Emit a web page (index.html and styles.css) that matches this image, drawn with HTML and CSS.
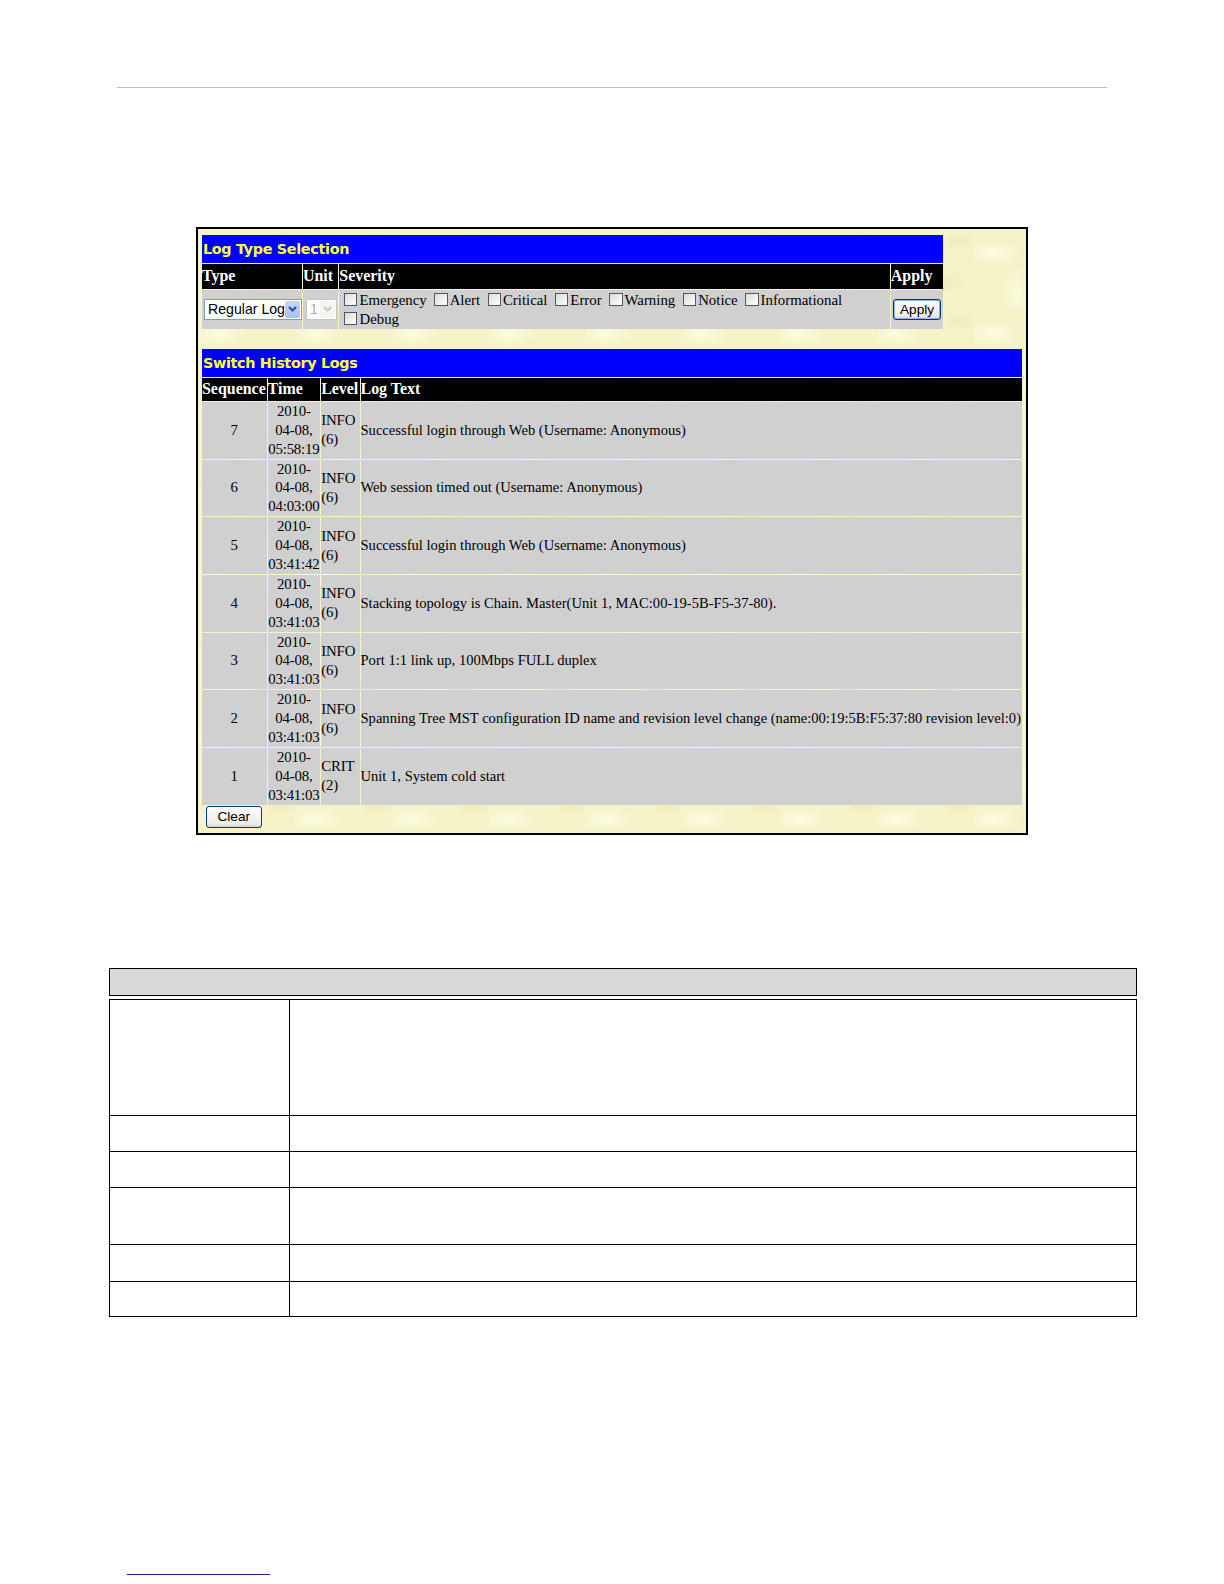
FILE: index.html
```html
<!DOCTYPE html>
<html>
<head>
<meta charset="utf-8">
<title>Switch History Logs</title>
<link rel="stylesheet" href="styles.css">
</head>
<body>
<div class="page">
  <div class="rule"></div>

  <div class="frame">
    <table class="tbl tbl-type">
      <colgroup><col class="w-type"><col class="w-unit"><col class="w-sev"><col class="w-apply"></colgroup>
      <tr><td class="title" colspan="4">Log Type Selection</td></tr>
      <tr class="head">
        <th>Type</th>
        <th>Unit</th>
        <th>Severity</th>
        <th>Apply</th>
      </tr>
      <tr class="data">
        <td class="c-type">
          <span class="select sel-type"><span class="sel-text">Regular Log</span><span class="sel-btn"><svg width="9" height="6" viewBox="0 0 9 6"><path d="M1 1 L4.5 4.5 L8 1" fill="none" stroke="#2b4f9e" stroke-width="2"/></svg></span></span>
        </td>
        <td class="c-unit">
          <span class="select sel-unit"><span class="sel-text">1</span><span class="sel-btn"><svg width="9" height="6" viewBox="0 0 9 6"><path d="M1 1 L4.5 4.5 L8 1" fill="none" stroke="#c6c6c6" stroke-width="2"/></svg></span></span>
        </td>
        <td class="c-sev">
          <label class="chk"><input type="checkbox">Emergency</label>
          <label class="chk"><input type="checkbox">Alert</label>
          <label class="chk"><input type="checkbox">Critical</label>
          <label class="chk"><input type="checkbox">Error</label>
          <label class="chk"><input type="checkbox">Warning</label>
          <label class="chk"><input type="checkbox">Notice</label>
          <label class="chk"><input type="checkbox">Informational</label><br>
          <label class="chk"><input type="checkbox">Debug</label>
        </td>
        <td class="c-apply"><button class="btn btn-apply">Apply</button></td>
      </tr>
    </table>

    <table class="tbl tbl-logs">
      <colgroup><col class="w-seq"><col class="w-time"><col class="w-level"><col class="w-text"></colgroup>
      <tr><td class="title" colspan="4">Switch History Logs</td></tr>
      <tr class="head">
        <th>Sequence</th>
        <th>Time</th>
        <th>Level</th>
        <th>Log Text</th>
      </tr>
      <tr class="log">
        <td class="c-seq">7</td>
        <td class="c-time">2010-<br>04-08,<br>05:58:19</td>
        <td class="c-level">INFO<br>(6)</td>
        <td class="c-text">Successful login through Web (Username: Anonymous)</td>
      </tr>
      <tr class="log">
        <td class="c-seq">6</td>
        <td class="c-time">2010-<br>04-08,<br>04:03:00</td>
        <td class="c-level">INFO<br>(6)</td>
        <td class="c-text">Web session timed out (Username: Anonymous)</td>
      </tr>
      <tr class="log">
        <td class="c-seq">5</td>
        <td class="c-time">2010-<br>04-08,<br>03:41:42</td>
        <td class="c-level">INFO<br>(6)</td>
        <td class="c-text">Successful login through Web (Username: Anonymous)</td>
      </tr>
      <tr class="log">
        <td class="c-seq">4</td>
        <td class="c-time">2010-<br>04-08,<br>03:41:03</td>
        <td class="c-level">INFO<br>(6)</td>
        <td class="c-text">Stacking topology is Chain. Master(Unit 1, MAC:00-19-5B-F5-37-80).</td>
      </tr>
      <tr class="log">
        <td class="c-seq">3</td>
        <td class="c-time">2010-<br>04-08,<br>03:41:03</td>
        <td class="c-level">INFO<br>(6)</td>
        <td class="c-text">Port 1:1 link up, 100Mbps FULL duplex</td>
      </tr>
      <tr class="log">
        <td class="c-seq">2</td>
        <td class="c-time">2010-<br>04-08,<br>03:41:03</td>
        <td class="c-level">INFO<br>(6)</td>
        <td class="c-text">Spanning Tree MST configuration ID name and revision level change (name:00:19:5B:F5:37:80 revision level:0)</td>
      </tr>
      <tr class="log">
        <td class="c-seq">1</td>
        <td class="c-time">2010-<br>04-08,<br>03:41:03</td>
        <td class="c-level">CRIT<br>(2)</td>
        <td class="c-text">Unit 1, System cold start</td>
      </tr>
    </table>
    <button class="btn btn-clear">Clear</button>
  </div>

  <div class="desc-head"></div>
  <table class="desc">
    <tr class="r1"><td class="k"></td><td class="v"></td></tr>
    <tr class="r2"><td class="k"></td><td class="v"></td></tr>
    <tr class="r3"><td class="k"></td><td class="v"></td></tr>
    <tr class="r4"><td class="k"></td><td class="v"></td></tr>
    <tr class="r5"><td class="k"></td><td class="v"></td></tr>
    <tr class="r6"><td class="k"></td><td class="v"></td></tr>
  </table>

  <div class="footlink"></div>
</div>
</body>
</html>
```

FILE: styles.css
```css
html, body {
  margin: 0;
  padding: 0;
  background: #ffffff;
}

.page {
  zoom: 1.0101;
  padding-top: 86px;
}

.rule {
  margin-left: 116px;
  width: 980px;
  height: 1px;
  background: #bdbdbd;
}

.frame {
  box-sizing: border-box;
  margin: 138px 0 0 194px;
  width: 824px;
  height: 602px;
  border: 2px solid #000;
  padding: 5px 0 0 3px;
  background-color: #f5f3c8;
  background-image:
    radial-gradient(ellipse 40px 18px at 20% 30%, rgba(255,255,235,0.7), rgba(255,255,235,0) 70%),
    radial-gradient(ellipse 30px 14px at 70% 65%, rgba(236,232,180,0.6), rgba(236,232,180,0) 70%),
    radial-gradient(ellipse 22px 40px at 45% 80%, rgba(255,255,235,0.6), rgba(255,255,235,0) 70%),
    radial-gradient(ellipse 26px 12px at 85% 15%, rgba(234,230,176,0.55), rgba(234,230,176,0) 70%);
  background-size: 96px 80px;
}

.tbl {
  table-layout: fixed;
  border-collapse: separate;
  border-spacing: 1px;
  font-family: "Liberation Serif", "Times New Roman", serif;
  font-size: 14.7px;
  color: #000;
}

.tbl td, .tbl th {
  padding: 0;
  overflow: visible;
}

.title {
  background: #0000ff;
  color: #ffff33;
  font-family: "DejaVu Sans", Verdana, sans-serif;
  font-weight: bold;
  font-size: 14.2px;
  height: 27px;
  vertical-align: middle;
  padding-left: 1px !important;
  letter-spacing: -0.3px;
  white-space: nowrap;
}

.head th {
  background: #000;
  color: #fff;
  font-weight: bold;
  text-align: left;
  font-size: 15.8px;
  vertical-align: middle;
  white-space: nowrap;
}

/* Log type table */
.tbl-type { width: 736px; }
.tbl-type .head th { height: 25px; }
.w-type { width: 99px; }
.w-unit { width: 35px; }
.w-sev { width: 545px; }
.w-apply { width: 52px; }

.tbl-type .data td {
  background: #d0d0d0;
  height: 38px;
  vertical-align: middle;
}

.tbl-type .data td.c-sev {
  line-height: 19px;
  padding-left: 5px;
  padding-top: 1px;
  vertical-align: top;
  white-space: nowrap;
}

.select {
  display: inline-flex;
  align-items: center;
  box-sizing: border-box;
  height: 21px;
  border: 1px solid #7f9db9;
  background: #fff;
  font-family: "Liberation Sans", Arial, sans-serif;
  font-size: 14px;
  vertical-align: middle;
}

.sel-type {
  width: 97px;
  margin-left: 2px;
}

.sel-unit {
  width: 31px;
  margin-left: 3px;
  border-color: #c9c7ba;
  color: #acacac;
}

.sel-text {
  flex: 1;
  padding-left: 3px;
  white-space: nowrap;
}

.sel-btn {
  width: 15px;
  height: 17px;
  margin-right: 1px;
  display: flex;
  align-items: center;
  justify-content: center;
  background: linear-gradient(#c6d6fa, #aabff0);
  border-radius: 2px;
}

.sel-unit .sel-btn {
  background: #f4f4f0;
}

.chk {
  white-space: nowrap;
  margin-right: 4px;
}

.chk input {
  -webkit-appearance: none;
  appearance: none;
  box-sizing: border-box;
  width: 13px;
  height: 13px;
  margin: 0 2px 0 0;
  border: 1px solid #4b5a6a;
  background: linear-gradient(135deg, #dcdcd6, #ffffff);
  vertical-align: -1px;
}

.btn {
  box-sizing: border-box;
  font-family: "Liberation Sans", Arial, sans-serif;
  font-size: 13.5px;
  color: #000;
  border: 1px solid #003c74;
  border-radius: 3px;
  background: linear-gradient(#ffffff, #ecebe6 85%, #d6d0c5);
  padding: 0;
  height: 21px;
}

.btn-apply {
  width: 48px;
  margin-left: 2px;
  box-shadow: inset 0 0 0 1px #8eaee6;
}

/* Logs table */
.tbl-logs {
  width: 814px;
  margin-top: 18px;
}

.tbl-logs .head th { height: 23px; }
.w-seq { width: 64px; }
.w-time { width: 52px; }
.w-level { width: 38px; }
.w-text { width: 655px; }

.log td {
  background: #d0d0d0;
  height: 56px;
  line-height: 18.7px;
  vertical-align: middle;
  white-space: nowrap;
}

.log .c-seq { text-align: center; }
.log .c-time { text-align: center; letter-spacing: -0.2px; }
.log .c-level { text-align: left; letter-spacing: -0.1px; }
.log .c-text { text-align: left; font-size: 14.45px; }

.btn-clear {
  display: block;
  width: 55px;
  height: 22px;
  margin: 0 0 0 5px;
}

/* Description table */
.desc-head {
  box-sizing: border-box;
  margin: 131px 0 0 108px;
  width: 1018px;
  height: 28px;
  border: 1px solid #000;
  background: #d9d9d9;
}

.desc {
  margin: 3px 0 0 108px;
  width: 1018px;
  border-collapse: collapse;
}

.desc td {
  border: 1px solid #000;
  padding: 0;
}

.desc .k { width: 177px; }
.desc .r1 td { height: 114px; }
.desc .r2 td { height: 35px; }
.desc .r3 td { height: 34px; }
.desc .r4 td { height: 56px; }
.desc .r5 td { height: 35px; }
.desc .r6 td { height: 34px; }

.footlink {
  margin: 254px 0 0 126px;
  width: 141px;
  height: 1px;
  background: #1d1d8c;
}
```
